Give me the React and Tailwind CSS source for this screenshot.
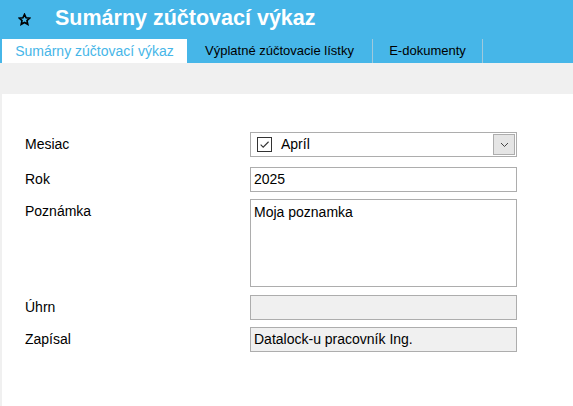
const FONT = { fontFamily: '"Liberation Sans", Arial, sans-serif' };

const TABS = ["Sumárny zúčtovací výkaz", "Výplatné zúčtovacie lístky", "E-dokumenty"];

function Star() {
  return (
    <svg width="13" height="13" viewBox="0 0 24 24" className="block">
      <path
        d="M12 2.5l2.9 6.3 6.8.7-5.1 4.6 1.5 6.8L12 17.4l-6.1 3.5 1.5-6.8-5.1-4.6 6.8-.7z"
        fill="none"
        stroke="#000"
        strokeWidth="3"
        strokeLinejoin="miter"
      />
    </svg>
  );
}

function Label({ children, className = "" }) {
  return <div className={`text-[14px] text-black ${className}`}>{children}</div>;
}

export default function App() {
  return (
    <div className="w-[573px] h-[406px] bg-[#f0f0f0] flex flex-col overflow-hidden" style={FONT}>
      {/* Header */}
      <div className="bg-[#46b6e8] flex flex-col">
        <div className="h-[39px] flex items-center">
          <div className="w-[55px] flex justify-center pr-[6px]">
            <Star />
          </div>
          <h1 className="text-[21.5px] font-bold text-white leading-none -mt-[2px]">Sumárny zúčtovací výkaz</h1>
        </div>
        <div className="h-[24px] flex pl-[2px]">
          {TABS.map((t, i) => (
            <div
              key={t}
              className={
                i === 0
                  ? "bg-white text-[#46b6e8] w-[185px] flex items-center justify-center text-[14px]"
                  : `text-black flex items-center justify-center text-[13px] border-r border-[#9fc9dc] ${i === 1 ? "w-[186px]" : "w-[110px]"}`
              }
            >
              {t}
            </div>
          ))}
        </div>
      </div>

      <div className="h-[31px]" />

      {/* Form */}
      <div className="flex-1 bg-white ml-[2px] pl-[23px] pt-[38px]">
        <div className="grid grid-cols-[225px_267px] text-[14px]">
          <Label className="h-[25px] flex items-center">Mesiac</Label>
          <div className="h-[25px] border border-[#adadad] flex items-center pl-[6px] pr-[1px]">
            <div className="w-[15px] h-[15px] border border-[#333] flex items-center justify-center">
              <svg width="11" height="11" viewBox="0 0 10 10">
                <path d="M1.5 5.2l2.3 2.3L8.7 2.5" fill="none" stroke="#333" strokeWidth="1" />
              </svg>
            </div>
            <span className="ml-[9px] flex-1">Apríl</span>
            <div className="w-[22px] h-[21px] bg-[#e5e5e5] border border-[#adadad] flex items-center justify-center">
              <svg width="9" height="6" viewBox="0 0 9 6">
                <path d="M1 1l3.5 3.5L8 1" fill="none" stroke="#444" strokeWidth="1" />
              </svg>
            </div>
          </div>

          <Label className="h-[25px] mt-[10px] flex items-center">Rok</Label>
          <div className="h-[25px] mt-[10px] border border-[#adadad] flex items-center px-[3px]">2025</div>

          <Label className="mt-[7px] pt-[2px]">Poznámka</Label>
          <div className="h-[88px] mt-[7px] border border-[#adadad] px-[3px] pt-[2px]">Moja poznamka</div>

          <Label className="h-[25px] mt-[8px] flex items-center">Úhrn</Label>
          <div className="h-[25px] mt-[8px] border border-[#adadad] bg-[#f0f0f0]" />

          <Label className="h-[25px] mt-[7px] flex items-center">Zapísal</Label>
          <div className="h-[25px] mt-[7px] border border-[#adadad] bg-[#f0f0f0] flex items-center px-[3px]">
            Datalock-u pracovník Ing.
          </div>
        </div>
      </div>
    </div>
  );
}
